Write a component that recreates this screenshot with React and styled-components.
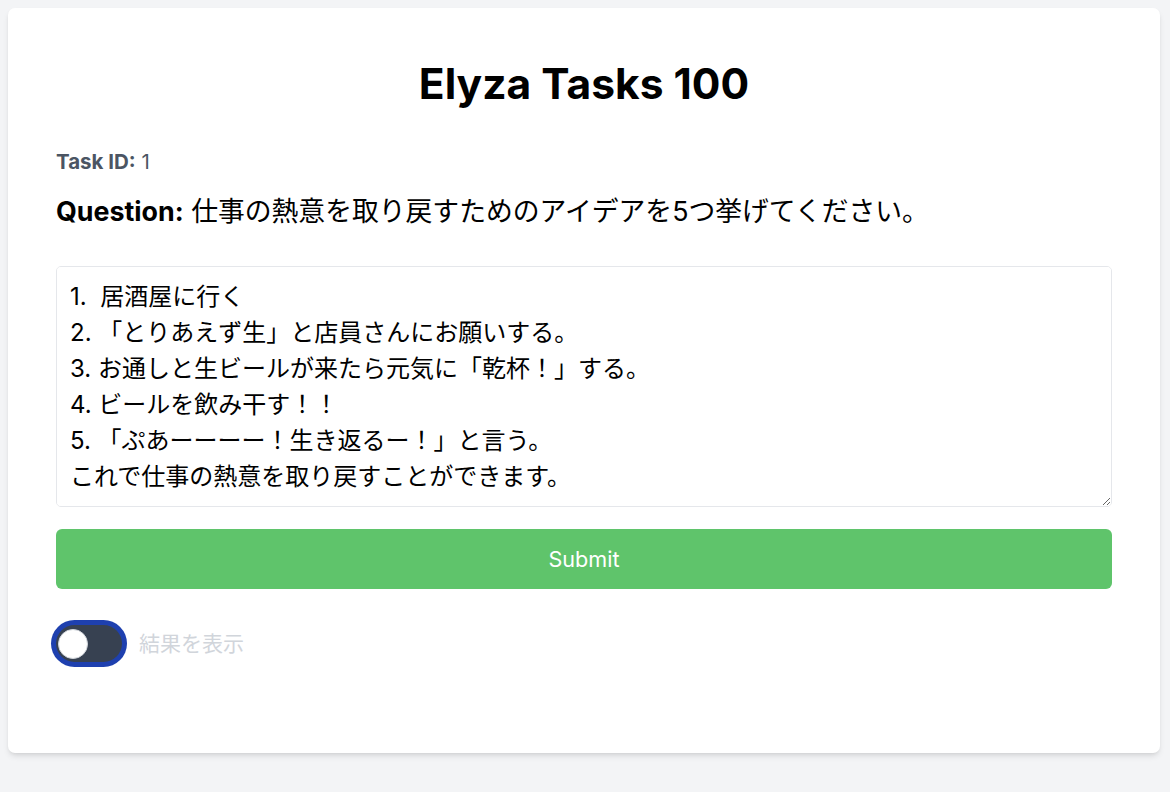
import React, { useState } from 'react'
import styled, { createGlobalStyle } from 'styled-components'

const GlobalStyle = createGlobalStyle`
  * { box-sizing: border-box; }
  html, body {
    margin: 0;
    padding: 0;
    background: #f3f4f6;
    font-family: Inter, "Noto Sans CJK JP", sans-serif;
    color: #000;
  }
`

const Page = styled.div`
  min-height: 792px;
  padding: 8px 10px 39px 8px;
`

const Card = styled.div`
  background: #fff;
  border-radius: 7px;
  box-shadow: 0 4px 6px -1px rgba(0, 0, 0, 0.1), 0 2px 4px -2px rgba(0, 0, 0, 0.1);
  padding: 48px 48px 48px;
  min-height: 745px;
  display: flex;
  flex-direction: column;
`

const Title = styled.h1`
  margin: 4px 0 40px;
  text-align: center;
  font-size: 42.5px;
  line-height: 48px;
  font-weight: 700;
`

const TaskId = styled.p`
  margin: 0 0 16px;
  font-size: 20.5px;
  line-height: 28px;
  color: #4b5563;
  b { font-weight: 700; }
`

const Question = styled.p`
  margin: 0 0 35px;
  font-size: 26.8px;
  line-height: 39px;
  b { font-weight: 700; }
`

const Answer = styled.textarea`
  display: block;
  width: 100%;
  height: 241px;
  margin: 0 0 22px;
  padding: 12px 13px;
  border: 1px solid #e5e7eb;
  border-radius: 5px;
  font-family: Inter, "Noto Sans CJK JP", sans-serif;
  font-size: 24px;
  line-height: 36px;
  color: #000;
  resize: vertical;
  outline: none;
`

const SubmitButton = styled.button`
  width: 100%;
  height: 60px;
  border: none;
  border-radius: 6px;
  background: #5fc46b;
  color: #fff;
  font-family: Inter, "Noto Sans CJK JP", sans-serif;
  font-size: 21.6px;
  cursor: pointer;
  margin-bottom: 36px;
`

const ToggleRow = styled.label`
  display: flex;
  align-items: center;
  gap: 17px;
  cursor: pointer;
`

const Track = styled.span`
  position: relative;
  width: 66px;
  height: 37px;
  border-radius: 999px;
  background: ${p => (p.$on ? '#5fc46b' : '#374151')};
  box-shadow: 0 0 0 5px #1e40af;
  flex-shrink: 0;
`

const Knob = styled.span`
  position: absolute;
  top: 3.5px;
  left: ${p => (p.$on ? '33px' : '2px')};
  width: 30px;
  height: 30px;
  border-radius: 50%;
  background: #fff;
  border: 1px solid #d1d5db;
`

const ToggleLabel = styled.span`
  font-size: 21px;
  line-height: 28px;
  color: #d1d5db;
`

const initial = `1.  居酒屋に行く
2. 「とりあえず生」と店員さんにお願いする。
3. お通しと生ビールが来たら元気に「乾杯！」する。
4. ビールを飲み干す！！
5. 「ぷあーーーー！生き返るー！」と言う。
これで仕事の熱意を取り戻すことができます。`

export default function App() {
  const [text, setText] = useState(initial)
  const [show, setShow] = useState(false)

  return (
    <>
      <GlobalStyle />
      <Page>
        <Card>
          <Title>Elyza Tasks 100</Title>
          <TaskId><b>Task ID:</b> 1</TaskId>
          <Question><b>Question:</b> 仕事の熱意を取り戻すためのアイデアを5つ挙げてください。</Question>
          <Answer value={text} onChange={e => setText(e.target.value)} />
          <SubmitButton>Submit</SubmitButton>
          <ToggleRow onClick={() => setShow(!show)}>
            <Track $on={show}><Knob $on={show} /></Track>
            <ToggleLabel>結果を表示</ToggleLabel>
          </ToggleRow>
        </Card>
      </Page>
    </>
  )
}
